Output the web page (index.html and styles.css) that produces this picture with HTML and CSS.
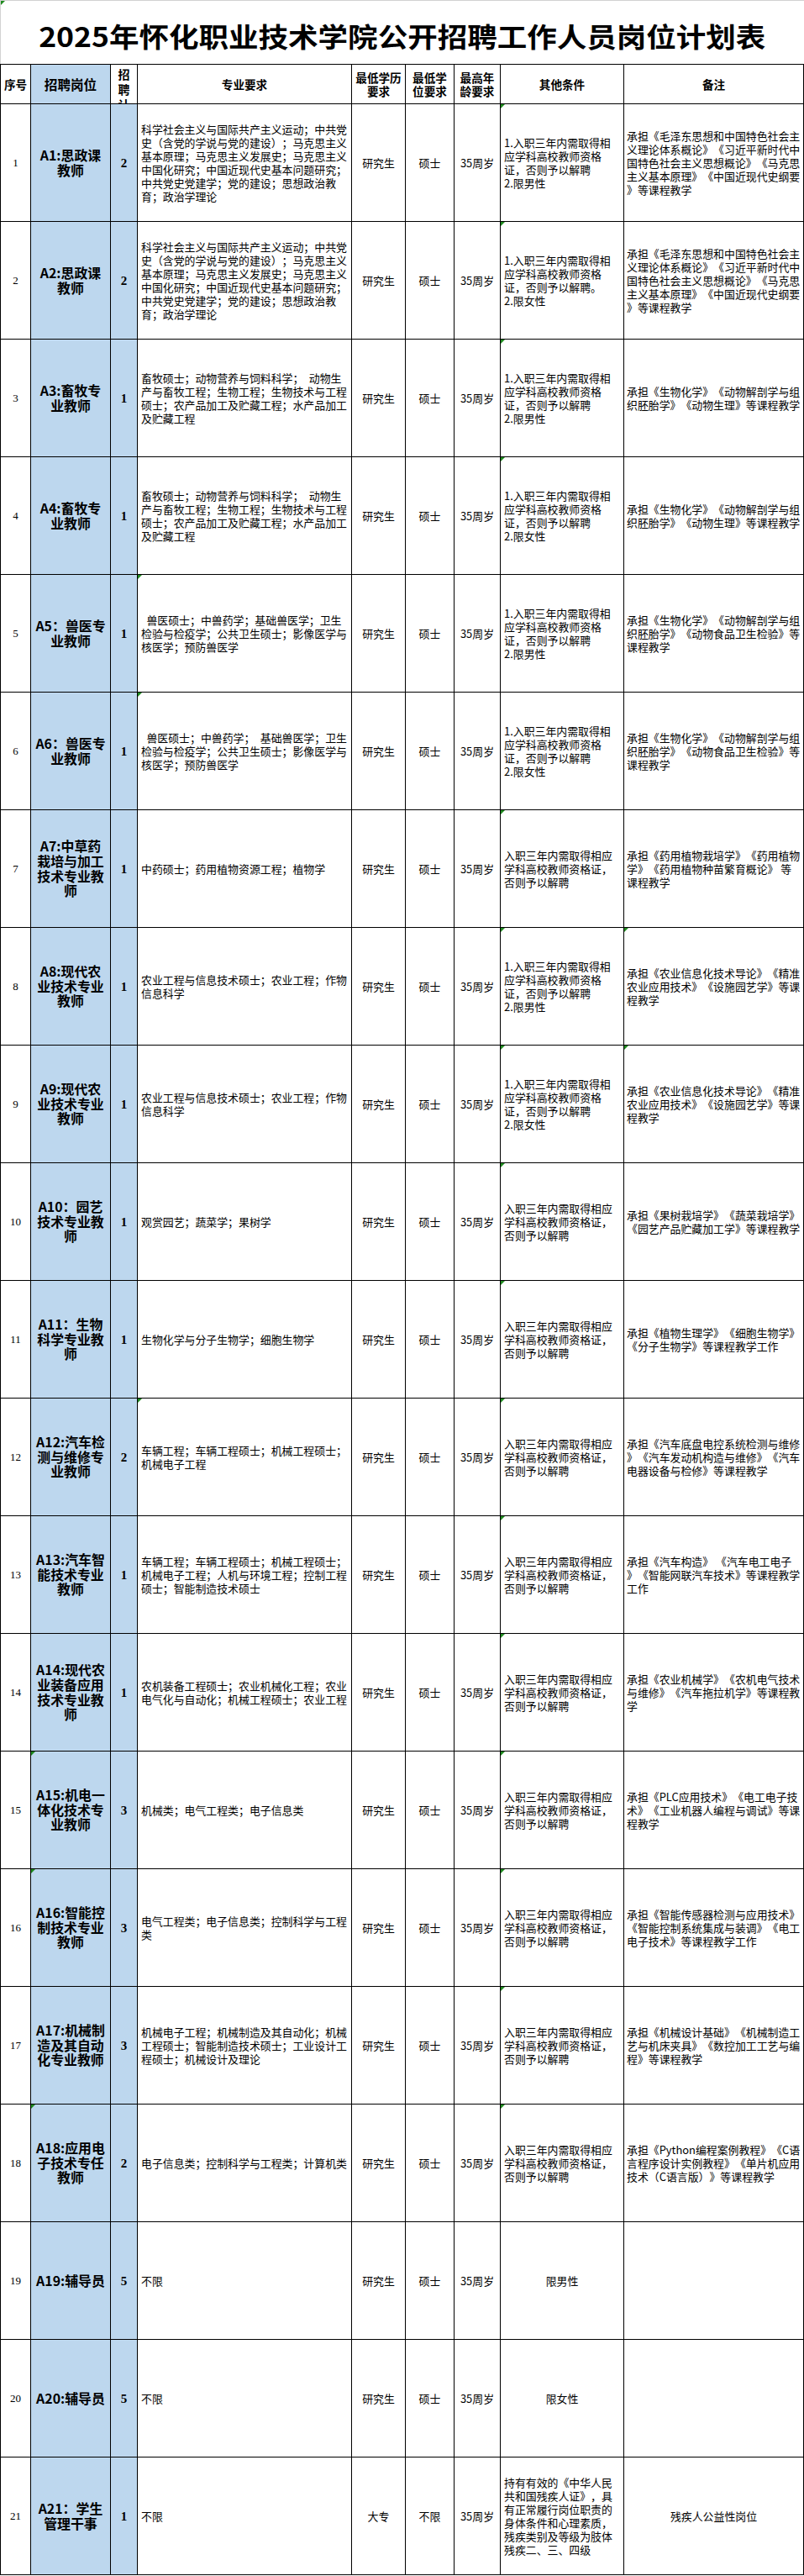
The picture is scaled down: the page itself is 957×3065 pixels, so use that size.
FILE: index.html
```html
<!DOCTYPE html>
<html lang="zh-CN">
<head>
<meta charset="utf-8">
<title>2025年怀化职业技术学院公开招聘工作人员岗位计划表</title>
<link rel="stylesheet" href="styles.css">
</head>
<body>
<div class="title mk"><h1>2025年怀化职业技术学院公开招聘工作人员岗位计划表</h1></div>
<div class="sheet">
  <div class="c h"><p>序号</p></div>
  <div class="c h hpost"><p>招聘岗位</p></div>
  <div class="c h hplan"><p>招<br>聘<br>计<br>划</p></div>
  <div class="c h"><p>专业要求</p></div>
  <div class="c h"><p>最低学历<br>要求</p></div>
  <div class="c h"><p>最低学<br>位要求</p></div>
  <div class="c h"><p>最高年<br>龄要求</p></div>
  <div class="c h"><p>其他条件</p></div>
  <div class="c h"><p>备注</p></div>

  <!-- 1 -->
  <div class="c no"><p>1</p></div>
  <div class="c post"><p>A1:思政课<br>教师</p></div>
  <div class="c cnt"><p>2</p></div>
  <div class="c l major"><p>科学社会主义与国际共产主义运动；中共党<br>史（含党的学说与党的建设）；马克思主义<br>基本原理；马克思主义发展史；马克思主义<br>中国化研究；中国近现代史基本问题研究；<br>中共党史党建学；党的建设；思想政治教<br>育；政治学理论</p></div>
  <div class="c"><p>研究生</p></div>
  <div class="c"><p>硕士</p></div>
  <div class="c"><p>35周岁</p></div>
  <div class="c l cond mk"><p>1.入职三年内需取得相<br>应学科高校教师资格<br>证，否则予以解聘<br>2.限男性</p></div>
  <div class="c l note"><p>承担《毛泽东思想和中国特色社会主<br>义理论体系概论》《习近平新时代中<br>国特色社会主义思想概论》《马克思<br>主义基本原理》《中国近现代史纲要<br>》等课程教学</p></div>

  <!-- 2 -->
  <div class="c no"><p>2</p></div>
  <div class="c post"><p>A2:思政课<br>教师</p></div>
  <div class="c cnt"><p>2</p></div>
  <div class="c l major"><p>科学社会主义与国际共产主义运动；中共党<br>史（含党的学说与党的建设）；马克思主义<br>基本原理；马克思主义发展史；马克思主义<br>中国化研究；中国近现代史基本问题研究；<br>中共党史党建学；党的建设；思想政治教<br>育；政治学理论</p></div>
  <div class="c"><p>研究生</p></div>
  <div class="c"><p>硕士</p></div>
  <div class="c"><p>35周岁</p></div>
  <div class="c l cond mk"><p>1.入职三年内需取得相<br>应学科高校教师资格<br>证，否则予以解聘。<br>2.限女性</p></div>
  <div class="c l note"><p>承担《毛泽东思想和中国特色社会主<br>义理论体系概论》《习近平新时代中<br>国特色社会主义思想概论》《马克思<br>主义基本原理》《中国近现代史纲要<br>》等课程教学</p></div>

  <!-- 3 -->
  <div class="c no"><p>3</p></div>
  <div class="c post"><p>A3:畜牧专<br>业教师</p></div>
  <div class="c cnt"><p>1</p></div>
  <div class="c l major"><p>畜牧硕士；动物营养与饲料科学；&ensp;动物生<br>产与畜牧工程；生物工程；生物技术与工程<br>硕士；农产品加工及贮藏工程；水产品加工<br>及贮藏工程</p></div>
  <div class="c"><p>研究生</p></div>
  <div class="c"><p>硕士</p></div>
  <div class="c"><p>35周岁</p></div>
  <div class="c l cond mk"><p>1.入职三年内需取得相<br>应学科高校教师资格<br>证，否则予以解聘<br>2.限男性</p></div>
  <div class="c l note"><p>承担《生物化学》《动物解剖学与组<br>织胚胎学》《动物生理》等课程教学</p></div>

  <!-- 4 -->
  <div class="c no"><p>4</p></div>
  <div class="c post"><p>A4:畜牧专<br>业教师</p></div>
  <div class="c cnt"><p>1</p></div>
  <div class="c l major"><p>畜牧硕士；动物营养与饲料科学；&ensp;动物生<br>产与畜牧工程；生物工程；生物技术与工程<br>硕士；农产品加工及贮藏工程；水产品加工<br>及贮藏工程</p></div>
  <div class="c"><p>研究生</p></div>
  <div class="c"><p>硕士</p></div>
  <div class="c"><p>35周岁</p></div>
  <div class="c l cond mk"><p>1.入职三年内需取得相<br>应学科高校教师资格<br>证，否则予以解聘<br>2.限女性</p></div>
  <div class="c l note"><p>承担《生物化学》《动物解剖学与组<br>织胚胎学》《动物生理》等课程教学</p></div>

  <!-- 5 -->
  <div class="c no"><p>5</p></div>
  <div class="c post"><p>A5：兽医专<br>业教师</p></div>
  <div class="c cnt"><p>1</p></div>
  <div class="c l major mk"><p>&ensp;兽医硕士；中兽药学；基础兽医学；卫生<br>检验与检疫学；公共卫生硕士；影像医学与<br>核医学；预防兽医学</p></div>
  <div class="c"><p>研究生</p></div>
  <div class="c"><p>硕士</p></div>
  <div class="c"><p>35周岁</p></div>
  <div class="c l cond"><p>1.入职三年内需取得相<br>应学科高校教师资格<br>证，否则予以解聘<br>2.限男性</p></div>
  <div class="c l note"><p>承担《生物化学》《动物解剖学与组<br>织胚胎学》《动物食品卫生检验》等<br>课程教学</p></div>

  <!-- 6 -->
  <div class="c no"><p>6</p></div>
  <div class="c post"><p>A6：兽医专<br>业教师</p></div>
  <div class="c cnt"><p>1</p></div>
  <div class="c l major mk"><p>&ensp;兽医硕士；中兽药学；&ensp;基础兽医学；卫生<br>检验与检疫学；公共卫生硕士；影像医学与<br>核医学；预防兽医学</p></div>
  <div class="c"><p>研究生</p></div>
  <div class="c"><p>硕士</p></div>
  <div class="c"><p>35周岁</p></div>
  <div class="c l cond"><p>1.入职三年内需取得相<br>应学科高校教师资格<br>证，否则予以解聘<br>2.限女性</p></div>
  <div class="c l note"><p>承担《生物化学》《动物解剖学与组<br>织胚胎学》《动物食品卫生检验》等<br>课程教学</p></div>

  <!-- 7 -->
  <div class="c no"><p>7</p></div>
  <div class="c post"><p>A7:中草药<br>栽培与加工<br>技术专业教<br>师</p></div>
  <div class="c cnt"><p>1</p></div>
  <div class="c l major"><p>中药硕士；药用植物资源工程；植物学</p></div>
  <div class="c"><p>研究生</p></div>
  <div class="c"><p>硕士</p></div>
  <div class="c"><p>35周岁</p></div>
  <div class="c l cond mk"><p>入职三年内需取得相应<br>学科高校教师资格证，<br>否则予以解聘</p></div>
  <div class="c l note"><p>承担《药用植物栽培学》《药用植物<br>学》《药用植物种苗繁育概论》 等<br>课程教学</p></div>

  <!-- 8 -->
  <div class="c no"><p>8</p></div>
  <div class="c post"><p>A8:现代农<br>业技术专业<br>教师</p></div>
  <div class="c cnt"><p>1</p></div>
  <div class="c l major"><p>农业工程与信息技术硕士；农业工程；作物<br>信息科学</p></div>
  <div class="c"><p>研究生</p></div>
  <div class="c"><p>硕士</p></div>
  <div class="c"><p>35周岁</p></div>
  <div class="c l cond mk"><p>1.入职三年内需取得相<br>应学科高校教师资格<br>证，否则予以解聘<br>2.限男性</p></div>
  <div class="c l note mk"><p>承担《农业信息化技术导论》《精准<br>农业应用技术》《设施园艺学》等课<br>程教学</p></div>

  <!-- 9 -->
  <div class="c no"><p>9</p></div>
  <div class="c post"><p>A9:现代农<br>业技术专业<br>教师</p></div>
  <div class="c cnt"><p>1</p></div>
  <div class="c l major"><p>农业工程与信息技术硕士；农业工程；作物<br>信息科学</p></div>
  <div class="c"><p>研究生</p></div>
  <div class="c"><p>硕士</p></div>
  <div class="c"><p>35周岁</p></div>
  <div class="c l cond mk"><p>1.入职三年内需取得相<br>应学科高校教师资格<br>证，否则予以解聘<br>2.限女性</p></div>
  <div class="c l note mk"><p>承担《农业信息化技术导论》《精准<br>农业应用技术》《设施园艺学》等课<br>程教学</p></div>

  <!-- 10 -->
  <div class="c no"><p>10</p></div>
  <div class="c post"><p>A10：园艺<br>技术专业教<br>师</p></div>
  <div class="c cnt"><p>1</p></div>
  <div class="c l major"><p>观赏园艺；蔬菜学；果树学</p></div>
  <div class="c"><p>研究生</p></div>
  <div class="c"><p>硕士</p></div>
  <div class="c"><p>35周岁</p></div>
  <div class="c l cond mk"><p>入职三年内需取得相应<br>学科高校教师资格证，<br>否则予以解聘</p></div>
  <div class="c l note"><p>承担《果树栽培学》《蔬菜栽培学》<br>《园艺产品贮藏加工学》等课程教学</p></div>

  <!-- 11 -->
  <div class="c no"><p>11</p></div>
  <div class="c post"><p>A11：生物<br>科学专业教<br>师</p></div>
  <div class="c cnt"><p>1</p></div>
  <div class="c l major"><p>生物化学与分子生物学；细胞生物学</p></div>
  <div class="c"><p>研究生</p></div>
  <div class="c"><p>硕士</p></div>
  <div class="c"><p>35周岁</p></div>
  <div class="c l cond mk"><p>入职三年内需取得相应<br>学科高校教师资格证，<br>否则予以解聘</p></div>
  <div class="c l note"><p>承担《植物生理学》《细胞生物学》<br>《分子生物学》等课程教学工作</p></div>

  <!-- 12 -->
  <div class="c no"><p>12</p></div>
  <div class="c post"><p>A12:汽车检<br>测与维修专<br>业教师</p></div>
  <div class="c cnt"><p>2</p></div>
  <div class="c l major mk"><p>车辆工程；车辆工程硕士；机械工程硕士；<br>机械电子工程</p></div>
  <div class="c"><p>研究生</p></div>
  <div class="c"><p>硕士</p></div>
  <div class="c"><p>35周岁</p></div>
  <div class="c l cond mk"><p>入职三年内需取得相应<br>学科高校教师资格证，<br>否则予以解聘</p></div>
  <div class="c l note"><p>承担《汽车底盘电控系统检测与维修<br>》《汽车发动机构造与维修》《汽车<br>电器设备与检修》等课程教学</p></div>

  <!-- 13 -->
  <div class="c no"><p>13</p></div>
  <div class="c post"><p>A13:汽车智<br>能技术专业<br>教师</p></div>
  <div class="c cnt"><p>1</p></div>
  <div class="c l major"><p>车辆工程；车辆工程硕士；机械工程硕士；<br>机械电子工程；人机与环境工程；控制工程<br>硕士；智能制造技术硕士</p></div>
  <div class="c"><p>研究生</p></div>
  <div class="c"><p>硕士</p></div>
  <div class="c"><p>35周岁</p></div>
  <div class="c l cond mk"><p>入职三年内需取得相应<br>学科高校教师资格证，<br>否则予以解聘</p></div>
  <div class="c l note"><p>承担《汽车构造》 《汽车电工电子<br>》《智能网联汽车技术》等课程教学<br>工作</p></div>

  <!-- 14 -->
  <div class="c no"><p>14</p></div>
  <div class="c post"><p>A14:现代农<br>业装备应用<br>技术专业教<br>师</p></div>
  <div class="c cnt"><p>1</p></div>
  <div class="c l major"><p>农机装备工程硕士；农业机械化工程；农业<br>电气化与自动化；机械工程硕士；农业工程</p></div>
  <div class="c"><p>研究生</p></div>
  <div class="c"><p>硕士</p></div>
  <div class="c"><p>35周岁</p></div>
  <div class="c l cond mk"><p>入职三年内需取得相应<br>学科高校教师资格证，<br>否则予以解聘</p></div>
  <div class="c l note"><p>承担《农业机械学》《农机电气技术<br>与维修》《汽车拖拉机学》等课程教<br>学</p></div>

  <!-- 15 -->
  <div class="c no"><p>15</p></div>
  <div class="c post mk"><p>A15:机电一<br>体化技术专<br>业教师</p></div>
  <div class="c cnt"><p>3</p></div>
  <div class="c l major"><p>机械类；电气工程类；电子信息类</p></div>
  <div class="c"><p>研究生</p></div>
  <div class="c"><p>硕士</p></div>
  <div class="c"><p>35周岁</p></div>
  <div class="c l cond mk"><p>入职三年内需取得相应<br>学科高校教师资格证，<br>否则予以解聘</p></div>
  <div class="c l note"><p>承担《PLC应用技术》《电工电子技<br>术》《工业机器人编程与调试》等课<br>程教学</p></div>

  <!-- 16 -->
  <div class="c no"><p>16</p></div>
  <div class="c post mk"><p>A16:智能控<br>制技术专业<br>教师</p></div>
  <div class="c cnt"><p>3</p></div>
  <div class="c l major"><p>电气工程类；电子信息类；控制科学与工程<br>类</p></div>
  <div class="c"><p>研究生</p></div>
  <div class="c"><p>硕士</p></div>
  <div class="c"><p>35周岁</p></div>
  <div class="c l cond mk"><p>入职三年内需取得相应<br>学科高校教师资格证，<br>否则予以解聘</p></div>
  <div class="c l note"><p>承担《智能传感器检测与应用技术》<br>《智能控制系统集成与装调》《电工<br>电子技术》等课程教学工作</p></div>

  <!-- 17 -->
  <div class="c no"><p>17</p></div>
  <div class="c post"><p>A17:机械制<br>造及其自动<br>化专业教师</p></div>
  <div class="c cnt"><p>3</p></div>
  <div class="c l major"><p>机械电子工程；机械制造及其自动化；机械<br>工程硕士；智能制造技术硕士；工业设计工<br>程硕士；机械设计及理论</p></div>
  <div class="c"><p>研究生</p></div>
  <div class="c"><p>硕士</p></div>
  <div class="c"><p>35周岁</p></div>
  <div class="c l cond mk"><p>入职三年内需取得相应<br>学科高校教师资格证，<br>否则予以解聘</p></div>
  <div class="c l note"><p>承担《机械设计基础》《机械制造工<br>艺与机床夹具》《数控加工工艺与编<br>程》等课程教学</p></div>

  <!-- 18 -->
  <div class="c no"><p>18</p></div>
  <div class="c post mk"><p>A18:应用电<br>子技术专任<br>教师</p></div>
  <div class="c cnt"><p>2</p></div>
  <div class="c l major"><p>电子信息类；控制科学与工程类；计算机类</p></div>
  <div class="c"><p>研究生</p></div>
  <div class="c"><p>硕士</p></div>
  <div class="c"><p>35周岁</p></div>
  <div class="c l cond mk"><p>入职三年内需取得相应<br>学科高校教师资格证，<br>否则予以解聘</p></div>
  <div class="c l note"><p>承担《Python编程案例教程》《C语<br>言程序设计实例教程》《单片机应用<br>技术（C语言版）》等课程教学</p></div>

  <!-- 19 -->
  <div class="c no"><p>19</p></div>
  <div class="c post"><p>A19:辅导员</p></div>
  <div class="c cnt"><p>5</p></div>
  <div class="c l major"><p>不限</p></div>
  <div class="c"><p>研究生</p></div>
  <div class="c"><p>硕士</p></div>
  <div class="c"><p>35周岁</p></div>
  <div class="c"><p>限男性</p></div>
  <div class="c"><p></p></div>

  <!-- 20 -->
  <div class="c no"><p>20</p></div>
  <div class="c post"><p>A20:辅导员</p></div>
  <div class="c cnt"><p>5</p></div>
  <div class="c l major"><p>不限</p></div>
  <div class="c"><p>研究生</p></div>
  <div class="c"><p>硕士</p></div>
  <div class="c"><p>35周岁</p></div>
  <div class="c"><p>限女性</p></div>
  <div class="c"><p></p></div>

  <!-- 21 -->
  <div class="c no"><p>21</p></div>
  <div class="c post"><p>A21：学生<br>管理干事</p></div>
  <div class="c cnt"><p>1</p></div>
  <div class="c l major"><p>不限</p></div>
  <div class="c"><p>大专</p></div>
  <div class="c"><p>不限</p></div>
  <div class="c"><p>35周岁</p></div>
  <div class="c l cond"><p>持有有效的《中华人民<br>共和国残疾人证》，具<br>有正常履行岗位职责的<br>身体条件和心理素质，<br>残疾类别及等级为肢体<br>残疾二、三、四级</p></div>
  <div class="c"><p>残疾人公益性岗位</p></div>
</div>
</body>
</html>
```

FILE: styles.css
```css
* {
  box-sizing: border-box;
  margin: 0;
  padding: 0;
}

body {
  margin: 0;
  width: 957px;
  background: #ffffff;
  color: #000000;
  font-family: "Noto Sans CJK SC", "Noto Sans", sans-serif;
}

.title {
  position: relative;
  height: 76px;
  border-top: 1px solid #d2d2d2;
  border-left: 1px solid #d2d2d2;
  display: flex;
  align-items: center;
  justify-content: center;
  padding-top: 6px;
}

.title h1 {
  font-size: 32px;
  font-weight: 700;
  line-height: 1;
  white-space: nowrap;
  transform: scaleX(1.11);
  letter-spacing: 0;
}

.sheet {
  display: grid;
  grid-template-columns: 36px 95px 32px 255px 64px 58px 55px 147px 214px;
  grid-template-rows: 47px;
  grid-auto-rows: 140px;
  border-top: 1px solid #000;
  border-left: 1px solid #000;
}

.c {
  position: relative;
  display: flex;
  align-items: center;
  justify-content: center;
  text-align: center;
  border-right: 1px solid #000;
  border-bottom: 1px solid #000;
  font-size: 12.9px;
  line-height: 16px;
  white-space: nowrap;
  overflow: hidden;
  text-spacing-trim: space-all;
}

.c.l {
  justify-content: flex-start;
  text-align: left;
}

.major {
  padding-left: 4px;
}

.cond {
  padding-left: 4px;
}

.note {
  padding-left: 3px;
}

.h {
  font-weight: 700;
  font-size: 13.6px;
  line-height: 16px;
}

.hpost {
  background: #bdd7ee;
  font-size: 15.6px;
}

.hplan {
  align-items: flex-start;
  padding-top: 2px;
  font-size: 14px;
  line-height: 18px;
}

.no {
  font-family: "Liberation Serif", "Noto Sans CJK SC", serif;
  font-size: 13px;
}

.post {
  background: #bdd7ee;
  font-weight: 700;
  font-size: 15.9px;
  line-height: 17.7px;
}

.cnt {
  background: #bdd7ee;
  font-family: "Liberation Serif", "Noto Sans CJK SC", serif;
  font-weight: 700;
  font-size: 15px;
}

.mk::before {
  content: "";
  position: absolute;
  left: 0;
  top: 0;
  border-top: 5px solid #1f8a1f;
  border-right: 5px solid transparent;
}
```
